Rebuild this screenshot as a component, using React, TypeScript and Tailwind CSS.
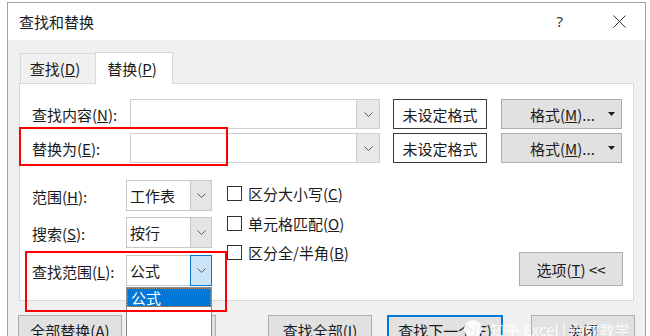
import React from "react";

const FONT = '"Noto Sans CJK SC", "Noto Sans", "Liberation Sans", sans-serif';

function Chevron() {
  return (
    <svg width="9" height="5" viewBox="0 0 9 5">
      <polyline points="0.5,0.5 4.5,4.5 8.5,0.5" fill="none" stroke="#5a5a5a" strokeWidth="1" />
    </svg>
  );
}

function Caret() {
  return (
    <svg width="7" height="4" viewBox="0 0 7 4">
      <polygon points="0,0 7,0 3.5,4" fill="#1b1b1b" />
    </svg>
  );
}

function WideCombo() {
  return (
    <div className="flex h-[30px] w-[250px] border border-[#cfcfcf] bg-white">
      <div className="flex-1" />
      <div className="flex w-[23px] items-center justify-center border-l border-[#cfcfcf] bg-[#e8e8e8]">
        <Chevron />
      </div>
    </div>
  );
}

function SmallCombo({ text, focused }: { text: string; focused?: boolean }) {
  return (
    <div className="flex h-[31px] w-[86px] border border-[#c8c8c8] bg-white">
      <div className="flex flex-1 items-center pl-[3px] text-[15px] leading-none">{text}</div>
      <div
        className={
          focused
            ? "-my-px -mr-px flex w-[22px] items-center justify-center border border-[#0078d7] bg-[#cce4f7]"
            : "flex w-[21px] items-center justify-center border-l border-[#c8c8c8] bg-[#e5e5e5]"
        }
      >
        <Chevron />
      </div>
    </div>
  );
}

function Check({ children }: { children: React.ReactNode }) {
  return (
    <div className="flex h-[20px] items-center">
      <div className="h-[15px] w-[15px] border border-[#333333] bg-white" />
      <span className="ml-[6px] text-[15px] leading-none">{children}</span>
    </div>
  );
}

function Label({ children }: { children: React.ReactNode }) {
  return <span className="text-[15px] leading-none">{children}</span>;
}

export default function App() {
  return (
    <div
      className="relative h-[336px] w-[650px] overflow-hidden bg-white text-[#1b1b1b]"
      style={{ fontFamily: FONT }}
    >
      <div className="ml-[7px] mt-[2px] h-[400px] w-[639px] border border-[#a0a0a0] bg-[#f0f0f0]">
        {/* title bar */}
        <div className="flex h-[37px] items-center bg-white pl-[11px] pr-[19px]">
          <span className="text-[15px] leading-none">查找和替换</span>
          <span className="ml-auto text-[15px] leading-none text-[#333]" style={{ fontFamily: '"Noto Sans", sans-serif' }}>
            ?
          </span>
          <svg className="ml-[50px]" width="13" height="13" viewBox="0 0 13 13">
            <line x1="0.5" y1="0.5" x2="12.5" y2="12.5" stroke="#333" strokeWidth="1" />
            <line x1="12.5" y1="0.5" x2="0.5" y2="12.5" stroke="#333" strokeWidth="1" />
          </svg>
        </div>

        {/* tabs */}
        <div className="flex items-end pl-[12px] pt-[12px]">
          <div className="flex h-[30px] w-[75px] items-center justify-center border-l border-t border-[#d9d9d9] bg-[#f0f0f0] pr-[6px] text-[15px] leading-none">
            查找(<u>D</u>)
          </div>
          <div className="relative z-10 -mb-px flex h-[32px] w-[78px] items-center justify-center border-l border-r border-t border-[#d9d9d9] bg-white pr-[4px] text-[15px] leading-none">
            替换(<u>P</u>)
          </div>
        </div>

        {/* panel */}
        <div className="ml-[11px] h-[218px] w-[615px] border border-[#d9d9d9] bg-white pl-[12px] pr-[10px] pt-[15px]">
          <div className="flex items-center">
            <div className="w-[98px]">
              <Label>
                查找内容(<u>N</u>):
              </Label>
            </div>
            <WideCombo />
            <div className="ml-[13px] flex h-[30px] w-[94px] items-center justify-center border border-[#3a3a3a] bg-white text-[15px] leading-none">
              未设定格式
            </div>
            <div className="ml-[14px] flex h-[30px] w-[121px] items-center border border-[#adadad] bg-[#e1e1e1] pl-[28px] pr-[6px] text-[15px] leading-none">
              <span>
                格式(<u>M</u>)...
              </span>
              <span className="ml-auto">
                <Caret />
              </span>
            </div>
          </div>
          <div className="mt-[4px] flex items-center">
            <div className="w-[98px]">
              <Label>
                替换为(<u>E</u>):
              </Label>
            </div>
            <WideCombo />
            <div className="ml-[13px] flex h-[30px] w-[94px] items-center justify-center border border-[#3a3a3a] bg-white text-[15px] leading-none">
              未设定格式
            </div>
            <div className="ml-[14px] flex h-[30px] w-[121px] items-center border border-[#adadad] bg-[#e1e1e1] pl-[28px] pr-[6px] text-[15px] leading-none">
              <span>
                格式(<u>M</u>)...
              </span>
              <span className="ml-auto">
                <Caret />
              </span>
            </div>
          </div>

          {/* lower section */}
          <div className="mt-[17px] flex">
            <div className="flex flex-col">
              <div className="flex items-center">
                <div className="w-[94px]">
                  <Label>
                    范围(<u>H</u>):
                  </Label>
                </div>
                <SmallCombo text="工作表" />
              </div>
              <div className="mt-[6px] flex items-center">
                <div className="w-[94px]">
                  <Label>
                    搜索(<u>S</u>):
                  </Label>
                </div>
                <SmallCombo text="按行" />
              </div>
              <div className="mt-[7px] flex items-center">
                <div className="w-[94px]">
                  <Label>
                    查找范围(<u>L</u>):
                  </Label>
                </div>
                <SmallCombo text="公式" focused />
              </div>
            </div>
            <div className="ml-[15px] flex flex-col pt-[3px]">
              <Check>
                区分大小写(<u>C</u>)
              </Check>
              <div className="mt-[10px]">
                <Check>
                  单元格匹配(<u>O</u>)
                </Check>
              </div>
              <div className="mt-[9px]">
                <Check>
                  区分全/半角(<u>B</u>)
                </Check>
              </div>
            </div>
            <div className="ml-auto pt-[72px]">
              <div className="flex h-[34px] w-[104px] items-center justify-center border border-[#adadad] bg-[#e1e1e1] text-[15px] leading-none">
                选项(<u>T</u>)&nbsp;&lt;&lt;
              </div>
            </div>
          </div>
        </div>

        {/* bottom buttons */}
        <div className="ml-[10px] mt-[14px] flex">
          <div className="flex h-[30px] w-[104px] items-center justify-center border border-[#adadad] bg-[#e1e1e1] text-[15px] leading-none">
            全部替换(<u>A</u>)
          </div>
          <div className="ml-[8px] flex h-[30px] w-[86px] items-center justify-center border border-[#adadad] bg-[#e1e1e1] text-[15px] leading-none">
            替换(<u>R</u>)
          </div>
          <div className="ml-[52px] flex h-[30px] w-[104px] items-center justify-center border border-[#adadad] bg-[#e1e1e1] text-[15px] leading-none">
            查找全部(<u>I</u>)
          </div>
          <div className="ml-[15px] flex h-[30px] w-[116px] items-center justify-center border-2 border-[#0078d7] bg-[#e1e1e1] text-[15px] leading-none">
            查找下一个(<u>F</u>)
          </div>
          <div className="ml-[28px] flex h-[30px] w-[104px] items-center justify-center border border-[#adadad] bg-[#e1e1e1] text-[15px] leading-none">
            关闭
          </div>
        </div>
      </div>

      {/* open dropdown list */}
      <div className="absolute left-[126px] top-[287px] h-[60px] w-[86px] border border-[#8a8a8a] bg-white">
        <div className="flex h-[19px] items-center border border-dotted border-[#b0906a] bg-[#0078d7] pl-[3px] text-[15px] leading-none text-white">
          公式
        </div>
      </div>

      {/* red highlight boxes */}
      <div className="absolute left-[19px] top-[127px] h-[39px] w-[209px] border-2 border-[#ff0000]" />
      <div className="absolute left-[25px] top-[251px] h-[61px] w-[202px] border-2 border-[#ff0000]" />

      {/* watermark */}
      <div className="absolute left-[464px] top-[320px] flex items-center text-[15px] leading-none text-[#c8c8c8]">
        <div className="h-[18px] w-[18px] rounded-full bg-white/90" />
        <span className="ml-[8px] text-white/80">
          知乎 Excel | 函数教学
        </span>
      </div>
    </div>
  );
}
